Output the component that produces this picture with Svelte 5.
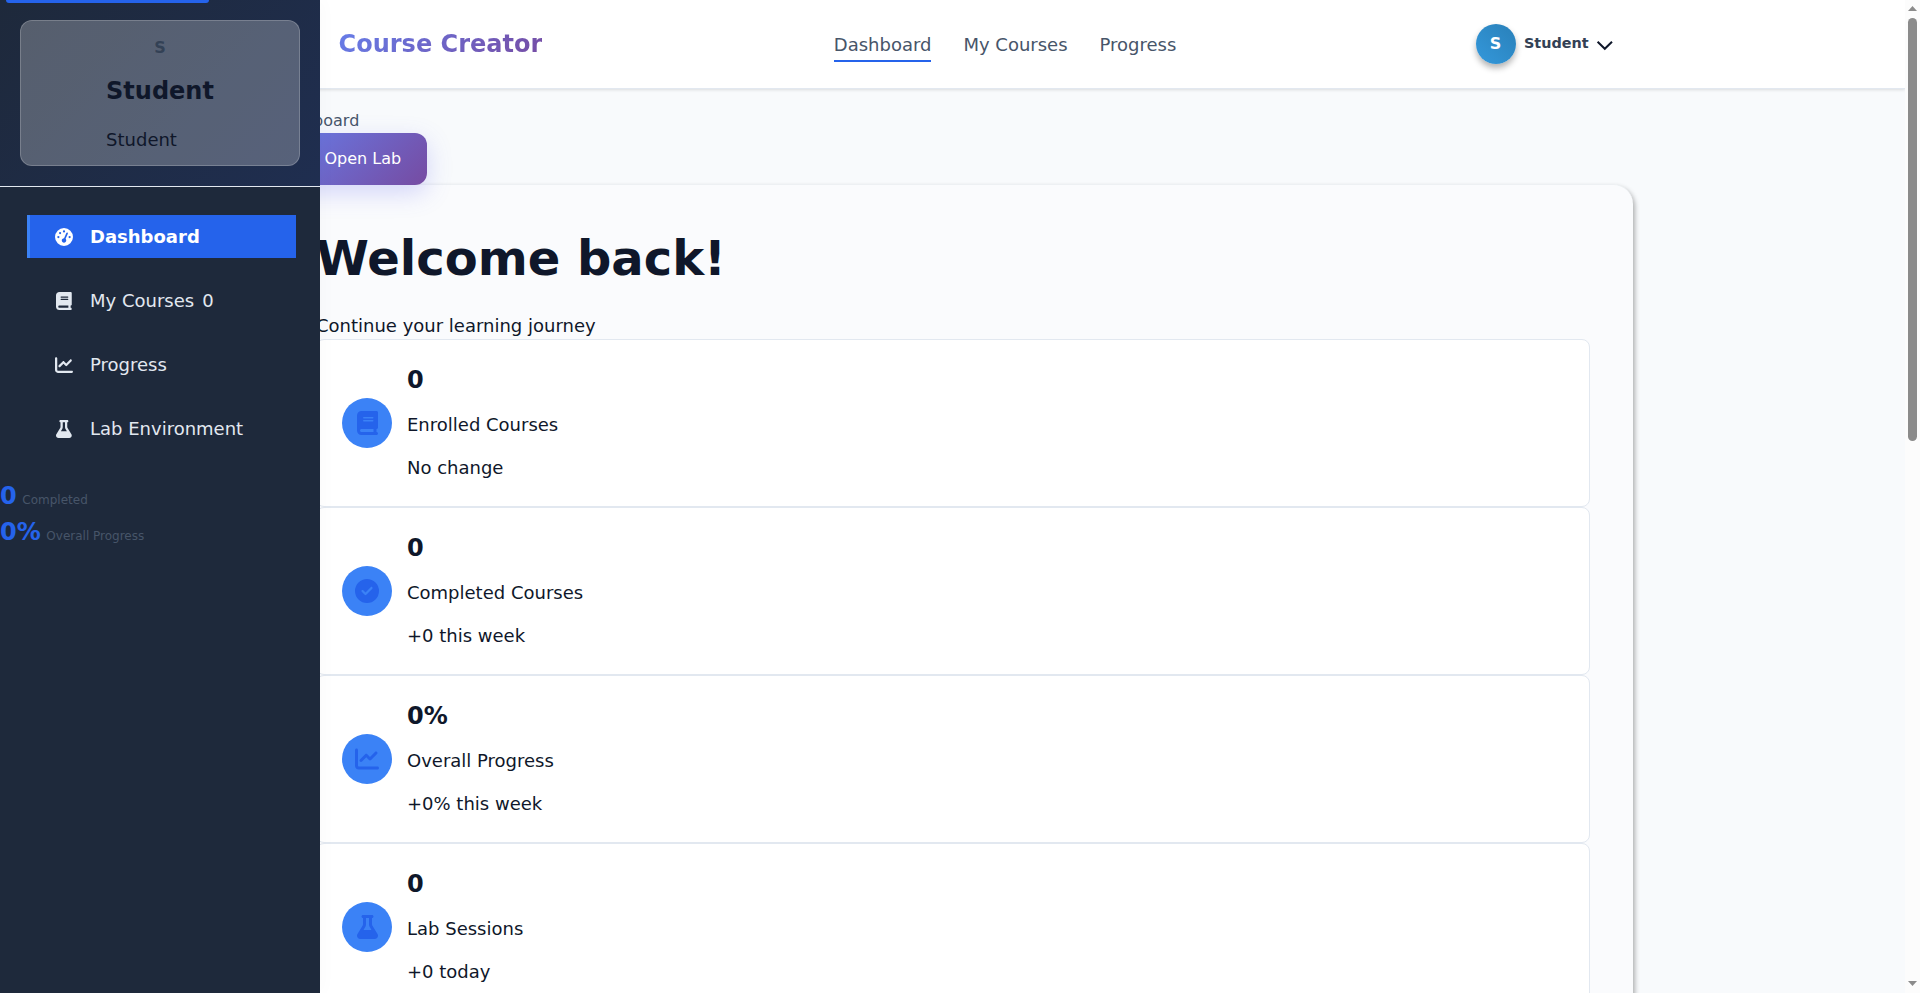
<script>
  const icons = {
    gauge: { w: 512, d: 'M0 256a256 256 0 1 1 512 0A256 256 0 1 1 0 256zM288 96a32 32 0 1 0 -64 0 32 32 0 1 0 64 0zM256 416c35.3 0 64-28.7 64-64c0-17.4-6.9-33.1-18.1-44.6L366 161.7c5.3-12.1-.2-26.3-12.3-31.6s-26.3 .2-31.6 12.3L257.9 288c-.6 0-1.3 0-1.9 0c-35.3 0-64 28.7-64 64s28.7 64 64 64zM176 144a32 32 0 1 0 -64 0 32 32 0 1 0 64 0zM96 288a32 32 0 1 0 0-64 32 32 0 1 0 0 64zm352-32a32 32 0 1 0 -64 0 32 32 0 1 0 64 0z' },
    book: { w: 448, d: 'M96 0C43 0 0 43 0 96V416c0 53 43 96 96 96H384h32c17.7 0 32-14.3 32-32s-14.3-32-32-32V384c17.7 0 32-14.3 32-32V32c0-17.7-14.3-32-32-32H384 96zm0 384H352v64H96c-17.7 0-32-14.3-32-32s14.3-32 32-32zm32-240c0-8.8 7.2-16 16-16H336c8.8 0 16 7.2 16 16s-7.2 16-16 16H144c-8.8 0-16-7.2-16-16zm16 48H336c8.8 0 16 7.2 16 16s-7.2 16-16 16H144c-8.8 0-16-7.2-16-16s7.2-16 16-16z' },
    chart: { w: 512, d: 'M64 64c0-17.7-14.3-32-32-32S0 46.3 0 64V400c0 44.2 35.8 80 80 80H480c17.7 0 32-14.3 32-32s-14.3-32-32-32H80c-8.8 0-16-7.2-16-16V64zm406.6 86.6c12.5-12.5 12.5-32.8 0-45.3s-32.8-12.5-45.3 0L320 210.7l-57.4-57.4c-12.5-12.5-32.8-12.5-45.3 0l-112 112c-12.5 12.5-12.5 32.8 0 45.3s32.8 12.5 45.3 0L240 221.3l57.4 57.4c12.5 12.5 32.8 12.5 45.3 0l128-128z' },
    flask: { w: 448, d: 'M288 0H160 128C110.3 0 96 14.3 96 32s14.3 32 32 32V196.8c0 11.8-3.3 23.5-9.5 33.5L10.3 406.2C3.6 417.2 0 429.7 0 442.6C0 480.9 31.1 512 69.4 512H378.6c38.3 0 69.4-31.1 69.4-69.4c0-12.8-3.6-25.4-10.3-36.4L329.5 230.4c-6.2-10.1-9.5-21.7-9.5-33.5V64c17.7 0 32-14.3 32-32s-14.3-32-32-32H288zM192 196.8V64h64V196.8c0 23.7 6.6 46.9 19 67.1L309.5 320h-171L173 263.9c12.4-20.2 19-43.4 19-67.1z' },
    check: { w: 512, d: 'M256 512A256 256 0 1 0 256 0a256 256 0 1 0 0 512zM369 209L241 337c-9.4 9.4-24.6 9.4-33.9 0l-64-64c-9.4-9.4-9.4-24.6 0-33.9s24.6-9.4 33.9 0l47 47L335 175c9.4-9.4 24.6-9.4 33.9 0s9.4 24.6 0 33.9z' }
  };
  const menu = [
    { icon: 'gauge', label: 'Dashboard', active: true },
    { icon: 'book', label: 'My Courses', count: '0' },
    { icon: 'chart', label: 'Progress' },
    { icon: 'flask', label: 'Lab Environment' }
  ];
  const stats = [
    { icon: 'book', value: '0', label: 'Enrolled Courses', change: 'No change' },
    { icon: 'check', value: '0', label: 'Completed Courses', change: '+0 this week' },
    { icon: 'chart', value: '0%', label: 'Overall Progress', change: '+0% this week' },
    { icon: 'flask', value: '0', label: 'Lab Sessions', change: '+0 today' }
  ];
</script>

{#snippet icon(name, size)}
  <svg class="icon" height={size} width={(size * icons[name].w) / 512} viewBox="0 0 {icons[name].w} 512"><path d={icons[name].d} /></svg>
{/snippet}

<div class="app">
  <aside class="sidebar">
    <div class="profile-area">
      <div class="profile">
        <div class="initial">S</div>
        <div class="identity">
          <h3>Student</h3>
          <p>Student</p>
        </div>
      </div>
    </div>
    <nav class="menu">
      {#each menu as item}
        <a class="menu-item" class:active={item.active}>
          <span class="menu-icon">{@render icon(item.icon, 18)}</span>
          <span class="menu-label">{item.label}</span>
          {#if item.count}<span class="menu-label count">{item.count}</span>{/if}
        </a>
      {/each}
    </nav>
    <div class="summary">
      <div class="summary-row"><b>0</b><span>Completed</span></div>
      <div class="summary-row"><b>0%</b><span>Overall Progress</span></div>
    </div>
    <div class="skip"></div>
  </aside>

  <div class="page">
    <header>
      <div class="logo">Course Creator</div>
      <nav class="top-nav">
        <a class="current">Dashboard</a>
        <a>My Courses</a>
        <a>Progress</a>
      </nav>
      <div class="user">
        <div class="avatar">S</div>
        <span class="user-name">Student</span>
        <svg class="chevron" width="18" height="12" viewBox="0 0 18 12"><path d="M1.6 1.8L8.8 8.8L16 1.8" /></svg>
      </div>
    </header>
    <main>
      <div class="crumb">Dashboard</div>
      <button class="lab">{@render icon('flask', 16)}<span>Open Lab</span></button>
      <section class="panel">
        <h1>Welcome back!</h1>
        <p class="lead">Continue your learning journey</p>
        {#each stats as s}
          <article class="stat">
            <div class="badge">{@render icon(s.icon, 24)}</div>
            <div class="stat-text">
              <div class="value">{s.value}</div>
              <div class="label">{s.label}</div>
              <div class="change">{s.change}</div>
            </div>
          </article>
        {/each}
      </section>
    </main>
  </div>

  <div class="scrollbar">
    <svg width="15" height="18" viewBox="0 0 15 18"><path d="M3 11L7.5 6L12 11z" /></svg>
    <div class="thumb"></div>
    <svg class="down" width="15" height="14" viewBox="0 0 15 14"><path d="M3 2L7.5 7L12 2z" /></svg>
  </div>
</div>

<style>
  :global(body) { margin: 0; overflow: hidden; }
  * { box-sizing: border-box; }
  h1, h3, p { margin: 0; }
  .app {
    position: relative;
    display: flex;
    width: 1920px;
    height: 993px;
    overflow: hidden;
    background: #f8fafc;
    color: #0f172a;
    font: 18px/28.8px "DejaVu Sans", sans-serif;
  }
  .icon { display: block; fill: currentColor; }

  .sidebar {
    position: relative;
    z-index: 3;
    flex: none;
    width: 320px;
    background: #1e293b;
    box-shadow: 4px 0 15px rgba(0, 0, 0, 0.02);
  }
  .skip {
    position: absolute;
    left: 6px;
    top: 0;
    width: 203px;
    height: 3px;
    border-radius: 0 0 4px 4px;
    background: #2563eb;
  }
  .profile-area {
    height: 187px;
    padding: 20px;
    border-bottom: 1px solid #e2e8f0;
    background: linear-gradient(135deg, #1e293b, #1f2e50);
  }
  .profile {
    display: flex;
    flex-direction: column;
    align-items: center;
    height: 146px;
    padding-top: 14px;
    border: 1px solid rgba(255, 255, 255, 0.2);
    border-radius: 12px;
    background: rgba(255, 255, 255, 0.25);
  }
  .initial { color: #334155; font-size: 16px; font-weight: 700; line-height: 26px; }
  .identity { padding-top: 15px; }
  h3 { font-size: 24px; line-height: 30px; }
  .identity p { padding-top: 20px; }

  .menu {
    display: flex;
    flex-direction: column;
    gap: 21px;
    padding: 28px 24px 0 27px;
  }
  .menu-item {
    display: flex;
    align-items: center;
    height: 43px;
    padding-left: 25px;
    border-left: 3px solid transparent;
    color: #e2e8f0;
  }
  .menu-item.active { border-color: #3b82f6; background: #2563eb; color: #fff; font-weight: 700; }
  .menu-icon { display: flex; justify-content: center; width: 18px; margin-right: 17px; }
  .menu-label { padding-top: 2px; }
  .count { margin-left: 8px; }
  .summary { padding-top: 28px; }
  .summary-row { display: flex; align-items: baseline; height: 36px; line-height: 36px; color: #475569; font-size: 12px; }
  .summary-row b { margin-right: 5.6px; color: #2563eb; font-size: 24px; }

  .page { flex: none; width: 1585px; }
  header {
    display: grid;
    grid-template-columns: 495.2px 641.8px 1fr;
    align-items: center;
    height: 89px;
    margin-left: -20px;
    padding-left: 38.6px;
    border-bottom: 1px solid #e2e8f0;
    background: #fff;
    box-shadow: 0 1px 3px rgba(0, 0, 0, 0.12);
  }
  .logo {
    justify-self: start;
    background: linear-gradient(135deg, #667eea, #764ba2);
    background-clip: text;
    color: transparent;
    font-size: 24px;
    font-weight: 700;
    line-height: 38px;
  }
  .top-nav { display: flex; gap: 32px; padding-top: 4px; color: #475569; }
  .top-nav a { padding: 1px 0; border-bottom: 2px solid transparent; line-height: 28px; }
  .top-nav .current { border-color: #2563eb; }
  .user { display: flex; align-items: center; }
  .avatar {
    width: 40px;
    height: 40px;
    border-radius: 50%;
    background: linear-gradient(45deg, #3498db, #2980b9);
    box-shadow: 0 4px 6px rgba(0, 0, 0, 0.3);
    color: #fff;
    font-size: 16px;
    font-weight: 700;
    line-height: 39px;
    text-align: center;
  }
  .user-name { margin: 0 7px 2px 8.4px; color: #334155; font-size: 14.4px; font-weight: 700; }
  .chevron { margin-top: 3px; fill: none; stroke: #0f172a; stroke-width: 2; }

  main { width: 1361px; margin-left: -48px; padding-top: 18px; }
  .crumb { height: 26px; padding-left: 0.5px; color: #475569; font-size: 16px; line-height: 27px; }
  .lab {
    position: relative;
    z-index: 1;
    display: flex;
    align-items: center;
    gap: 8px;
    width: 155px;
    height: 52px;
    padding: 0 23px 2px 30.5px;
    border: 0;
    border-radius: 12px;
    background: linear-gradient(135deg, #667eea, #764ba2);
    box-shadow: 0 8px 25px rgba(99, 102, 241, 0.25);
    color: #fff;
    font: 16px "DejaVu Sans", sans-serif;
    white-space: nowrap;
  }
  .panel {
    height: 900px;
    margin-top: -1px;
    padding: 43px 43px 0 44px;
    border-top: 1px solid #edf0f3;
    border-radius: 20px;
    background: #fafbfd;
    box-shadow: 2px 3px 5px rgba(0, 0, 0, 0.3);
  }
  h1 { font-size: 48px; line-height: 60px; }
  .lead { height: 50.8px; padding-top: 24px; line-height: 28.8px; }
  .stat {
    display: flex;
    align-items: center;
    gap: 15px;
    height: 168px;
    padding: 0 24px 0 25px;
    border: 1px solid #e2e8f0;
    border-radius: 8px;
    background: #fff;
  }
  .badge {
    display: flex;
    align-items: center;
    justify-content: center;
    width: 50px;
    height: 50px;
    border-radius: 50%;
    background: #3b82f6;
    color: #2563eb;
  }
  .stat-text { padding-top: 2px; }
  .value { margin-bottom: 16px; font-size: 24px; font-weight: 700; line-height: 30px; }
  .change { margin-top: 14.4px; }

  .scrollbar { display: flex; flex-direction: column; width: 15px; background: #fcfcfc; }
  .scrollbar svg { flex: none; fill: #8b8b8b; }
  .scrollbar .down { margin-top: auto; }
  .thumb { width: 9px; height: 423px; margin-left: 3px; border-radius: 5px; background: #8b8b8b; }
</style>
